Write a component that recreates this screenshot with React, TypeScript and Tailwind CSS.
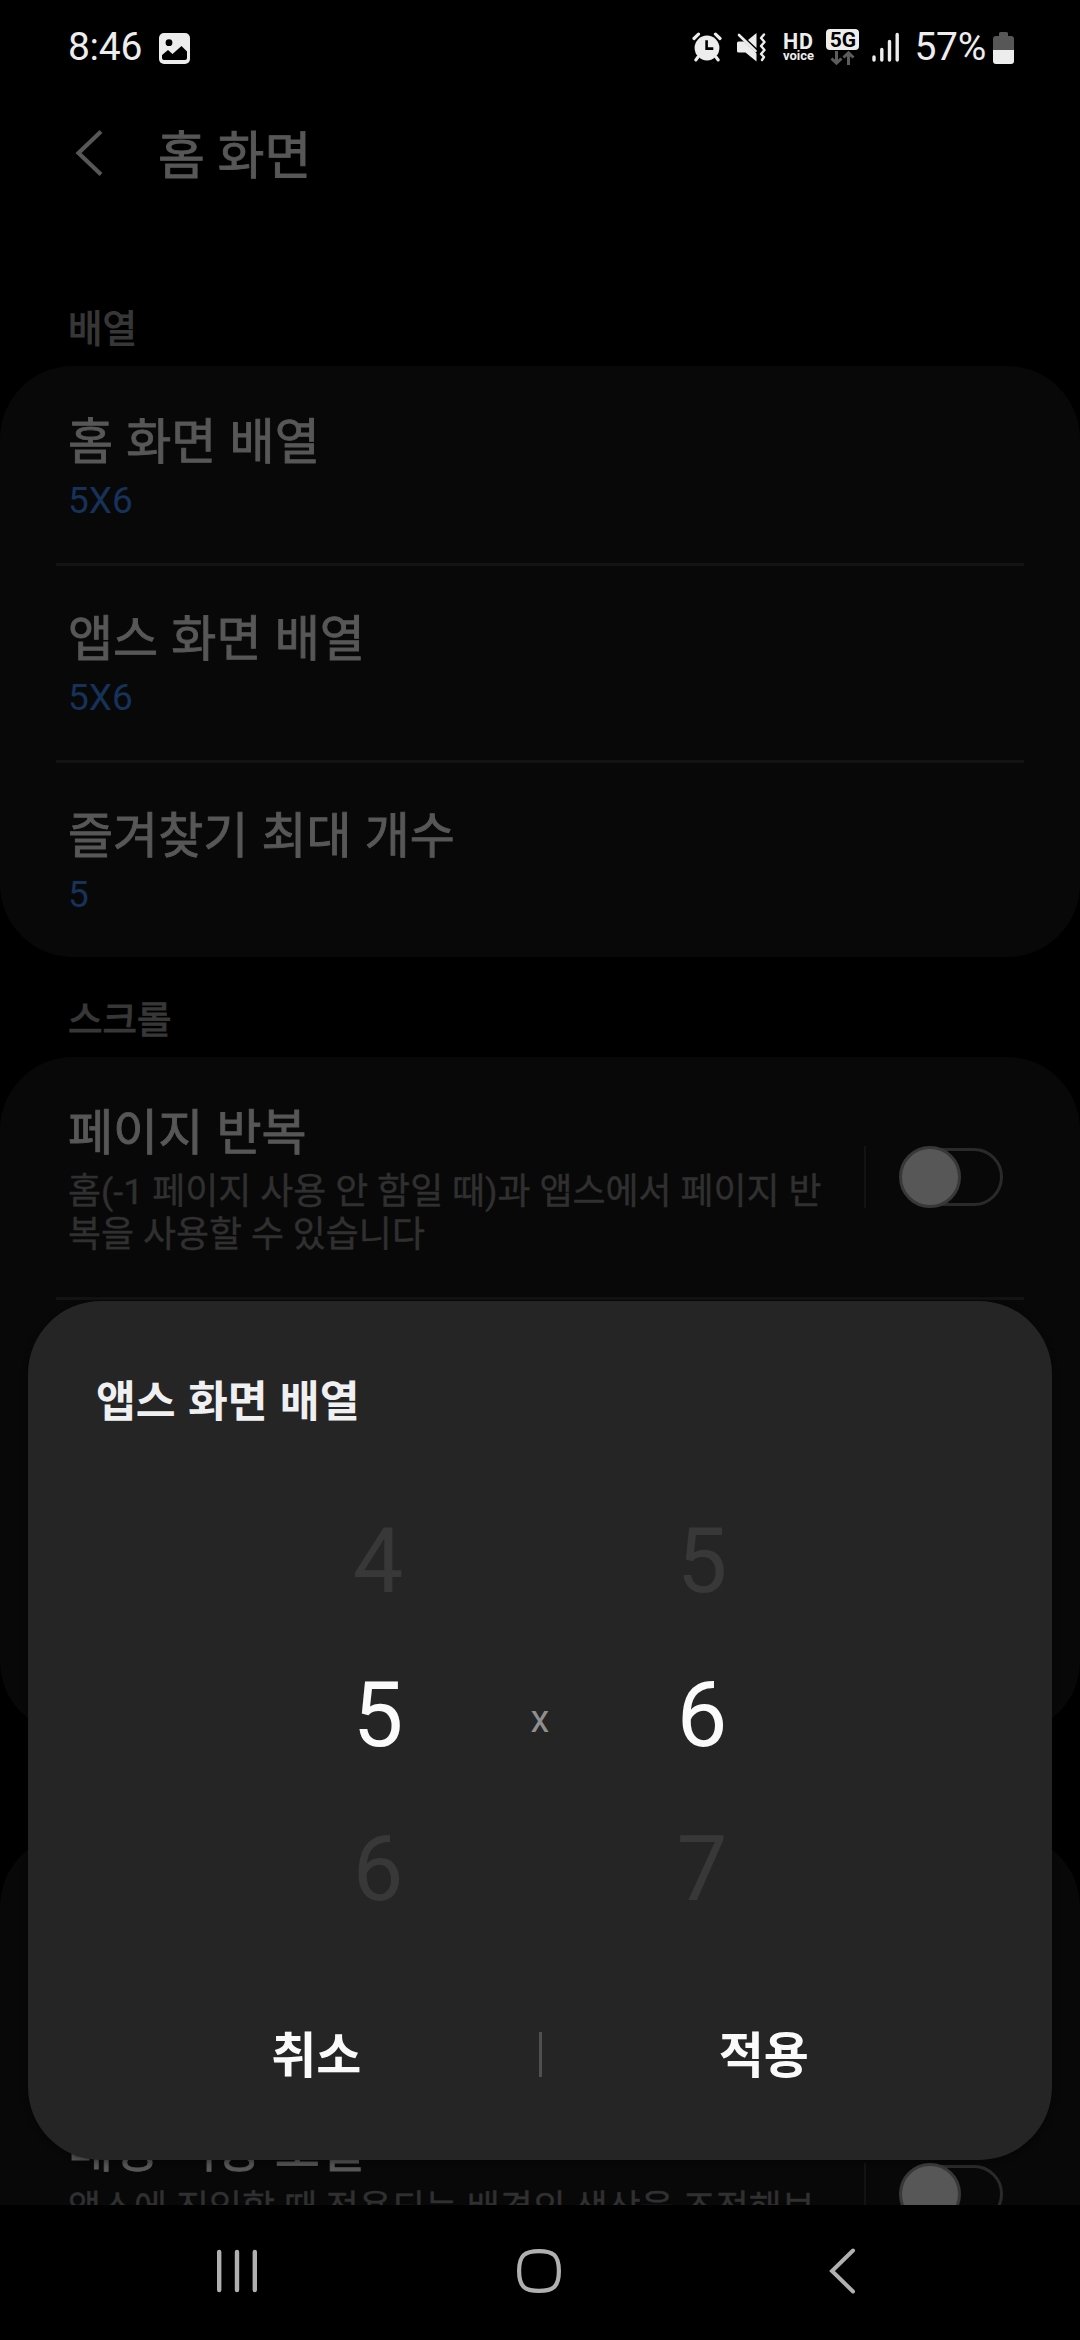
import type { ReactNode } from 'react';

function StatusBar() {
  return (
    <div className="flex h-[90px] items-center pt-1 pl-[68px] pr-[66px] text-[39px] text-[#ededed]">
      <span className="leading-[46px] tracking-[-0.3px]">8:46</span>
      <svg className="ml-[17px] mt-[2px] h-[31px] w-[31px]" viewBox="0 0 31 31">
        <rect width="31" height="31" rx="5" fill="#ededed" />
        <circle cx="10" cy="9.7" r="3.4" fill="#000" />
        <path d="M3 22 L9 17 L13.5 21 L22.5 13 L28 18.5 V25 Q28 27 26 27 H5 Q3 27 3 25 Z" fill="#000" />
      </svg>

      <div className="ml-auto flex items-center">
        {/* alarm */}
        <svg className="h-[30px] w-[30px]" viewBox="0 0 30 30" stroke="#ededed" fill="none" strokeLinecap="round">
          <circle cx="15" cy="16" r="12.4" fill="#ededed" stroke="none" />
          <path d="M2 6.5 L6.5 2.2 M28 6.5 L23.5 2.2" strokeWidth="3.2" />
          <path d="M6 25 L3.8 28 M24 25 L26.2 28" strokeWidth="3" />
          <path d="M14.6 9.5 V16.6 H20" stroke="#000" strokeWidth="2.6" strokeLinecap="square" />
        </svg>
        {/* muted, vibrating */}
        <svg className="ml-[14px] h-[30px] w-[31px]" viewBox="0 0 31 30">
          <path d="M2.5 9.5 H8 L20.5 21.5 V29.5 L9.5 20.5 H2.5 Q1 20.5 1 19 V11 Q1 9.5 2.5 9.5 Z" fill="#ededed" />
          <path d="M12 8 L20.5 1 V16 Z" fill="#ededed" />
          <path d="M3 3 L19.5 19" stroke="#ededed" strokeWidth="2.6" strokeLinecap="round" />
          <path d="M28 2.5 L25 6 L28.5 10 L25 14 L28.5 18 L25 22 L28 25 L26 28" stroke="#ededed" strokeWidth="2.4" strokeLinecap="round" strokeLinejoin="round" fill="none" />
        </svg>
        <div className="ml-[14px] flex w-[34px] flex-col items-center">
          <span className="text-[21.5px] leading-[17px] font-bold tracking-[1px]">HD</span>
          <span className="text-[13px] leading-[11px] font-bold">voice</span>
        </div>
        <div className="ml-[11px] flex w-[33px] flex-col items-center">
          <span className="h-[21px] w-[33px] rounded-[4px] bg-[#ededed] text-center text-[21px] leading-[22px] font-bold text-black">5G</span>
          <svg className="mt-px h-[14px] w-[25px]" viewBox="0 0 25 14" fill="none" stroke="#5c5c5c" strokeWidth="3">
            <path d="M6.5 0 V12 M1.5 7.5 L6.5 12.2 L11.5 7.5 M18.5 14 V2 M13.5 6.5 L18.5 1.8 L23.5 6.5" />
          </svg>
        </div>
        <svg className="ml-[13px] h-[30px] w-[28px]" viewBox="0 0 28 30" stroke="#ededed" strokeWidth="3.4" strokeLinecap="round">
          <path d="M2 25 V28 M9.8 17.5 V28 M17.5 9.5 V28 M25.2 2.5 V28" />
        </svg>
        <span className="ml-[14px] leading-[46px] tracking-[-0.3px]">57%</span>
        <svg className="ml-[7px] mt-px h-[32px] w-[21px]" viewBox="0 0 21 32">
          <path d="M6 1.5 Q6 0 7.5 0 H13.5 Q15 0 15 1.5 V4 H18 Q21 4 21 7 V18 H0 V7 Q0 4 3 4 H6 Z" fill="#575757" />
          <path d="M0 18 H21 V29 Q21 32 18 32 H3 Q0 32 0 29 Z" fill="#ededed" />
        </svg>
      </div>
    </div>
  );
}

function Section({ label, children }: { label: string; children: ReactNode }) {
  return (
    <section>
      <h2 className="h-[100px] pt-[41px] pl-[68px] text-[37.5px] leading-[44px] text-[#373737] [-webkit-text-stroke:1.1px_#373737]">
        {label}
      </h2>
      <div className="rounded-[73px] bg-[#080808]">{children}</div>
    </section>
  );
}

function Divider() {
  return <div className="mx-14 -mb-[3px] h-[3px] bg-[#131313]" />;
}

function Toggle() {
  return (
    <div className="flex items-center pt-[89px]">
      <div className="mr-[33px] h-[62px] w-[2px] bg-[#131313]" />
      <div className="flex w-[104px] items-center">
        <div className="z-10 h-[62px] w-[62px] rounded-full border-[3px] border-[#383838] bg-[#575757]" />
        <div className="-ml-[60px] h-[58px] w-[102px] rounded-full border-[3px] border-[#2a2a2a]" />
      </div>
    </div>
  );
}

function Row({ title, value, children }: { title: string; value?: string; children?: ReactNode }) {
  return (
    <div className="flex items-start justify-between pr-[77px] pb-10 pl-[68px]">
      <div className="pt-[47px]">
        <h3 className="text-[49px] leading-[60px] [word-spacing:1px] text-[#575757] [-webkit-text-stroke:0.9px_#575757]">{title}</h3>
        {value && <p className="mt-[6px] text-[37px] leading-[44px] text-[#16325a]">{value}</p>}
        {children && (
          <p className="mt-[7px] text-[35.9px] leading-[43px] whitespace-nowrap text-[#303030] [-webkit-text-stroke:0.4px_#303030]">
            {children}
          </p>
        )}
      </div>
      {children && <Toggle />}
    </div>
  );
}

function Picker({ values }: { values: number[] }) {
  return (
    <div className="flex w-[120px] flex-col items-center text-[90px] leading-[154px] text-[#383838]">
      <span>{values[0]}</span>
      <span className="text-[#fafafa]">{values[1]}</span>
      <span>{values[2]}</span>
    </div>
  );
}

function LayoutDialog() {
  return (
    <div className="absolute top-[1301px] left-[28px] h-[859px] w-[1024px] rounded-[73px] bg-[#252525] shadow-[0_2px_6px_rgba(0,0,0,0.4)]">
      <h2 className="pt-[72px] pl-[68px] text-[43.3px] leading-[60px] font-bold [word-spacing:1.5px] text-[#f0f0f2]">앱스 화면 배열</h2>
      <div className="mt-[52px] flex items-center justify-center">
        <Picker values={[4, 5, 6]} />
        <span className="w-[204px] pt-[6px] text-center text-[38px] leading-[44px] text-[#8f8f8f]">x</span>
        <Picker values={[5, 6, 7]} />
      </div>
      <div className="mt-[69px] flex items-center px-[66px] text-[49px] leading-[70px] font-bold text-[#fafafa]">
        <button className="flex-1 pt-[6px]">취소</button>
        <div className="h-[45px] w-[3px] bg-[#4f4f4f]" />
        <button className="flex-1 pt-[6px]">적용</button>
      </div>
    </div>
  );
}

function NavBar() {
  return (
    <nav className="flex h-[135px] items-center bg-black pb-[3px] pl-[215px]">
      <svg className="h-[46px] w-[44px]" viewBox="0 0 44 46" stroke="#b0b0b0" strokeWidth="4.4" strokeLinecap="round">
        <path d="M4.2 4 V42 M22 4 V42 M39.8 4 V42" />
      </svg>
      <svg className="ml-[257px] h-[46px] w-[46px]" viewBox="0 0 46 46" fill="none" stroke="#b0b0b0" strokeWidth="4.2">
        <path d="M23 3.1 C37 3.1 42.900 7 42.900 23 C42.900 39 37 42.900 23 42.900 C9 42.900 3.100 39 3.100 23 C3.100 7 9 3.100 23 3.100 Z" />
      </svg>
      <svg className="ml-[266px] h-[46px] w-[28px]" viewBox="0 0 28 46" fill="none" stroke="#b0b0b0" strokeWidth="4" strokeLinecap="round">
        <path d="M25 2.5 L4 23 L25 43.5" />
      </svg>
    </nav>
  );
}

export default function App() {
  return (
    <div className="relative flex h-[2340px] w-[1080px] flex-col overflow-hidden bg-black font-['Roboto','Noto_Sans_CJK_KR',sans-serif]">
      <div className="h-[2205px] overflow-hidden">
        <StatusBar />
        <header className="mb-[42px] flex h-[134px] items-center pl-[74px]">
          <svg className="mb-[8px] h-[48px] w-[30px]" viewBox="0 0 30 48" fill="none" stroke="#575757" strokeWidth="4.2">
            <path d="M27 2.5 L4.5 24 L27 45.5" />
          </svg>
          <h1 className="ml-[54px] text-[51px] leading-[60px] text-[#575757] [-webkit-text-stroke:0.9px_#575757]">홈 화면</h1>
        </header>

        <Section label="배열">
          <Row title="홈 화면 배열" value="5X6" />
          <Divider />
          <Row title="앱스 화면 배열" value="5X6" />
          <Divider />
          <Row title="즐겨찾기 최대 개수" value="5" />
        </Section>

        <Section label="스크롤">
          <Row title="페이지 반복">
            홈(-1 페이지 사용 안 함일 때)과 앱스에서 페이지 반
            <br />
            복을 사용할 수 있습니다
          </Row>
          <Divider />
          <div className="h-[437px]" />
        </Section>

        {/* the rest of the list sits behind the dialog */}
        <div className="mt-[100px] rounded-[73px] bg-[#080808] pt-[240px]">
          <Row title="배경 색상 조절">
            앱스에 진입할 때 적용되는 배경의 색상을 조정해보
            <br />
            세요
          </Row>
        </div>
      </div>

      <NavBar />
      <LayoutDialog />
    </div>
  );
}
